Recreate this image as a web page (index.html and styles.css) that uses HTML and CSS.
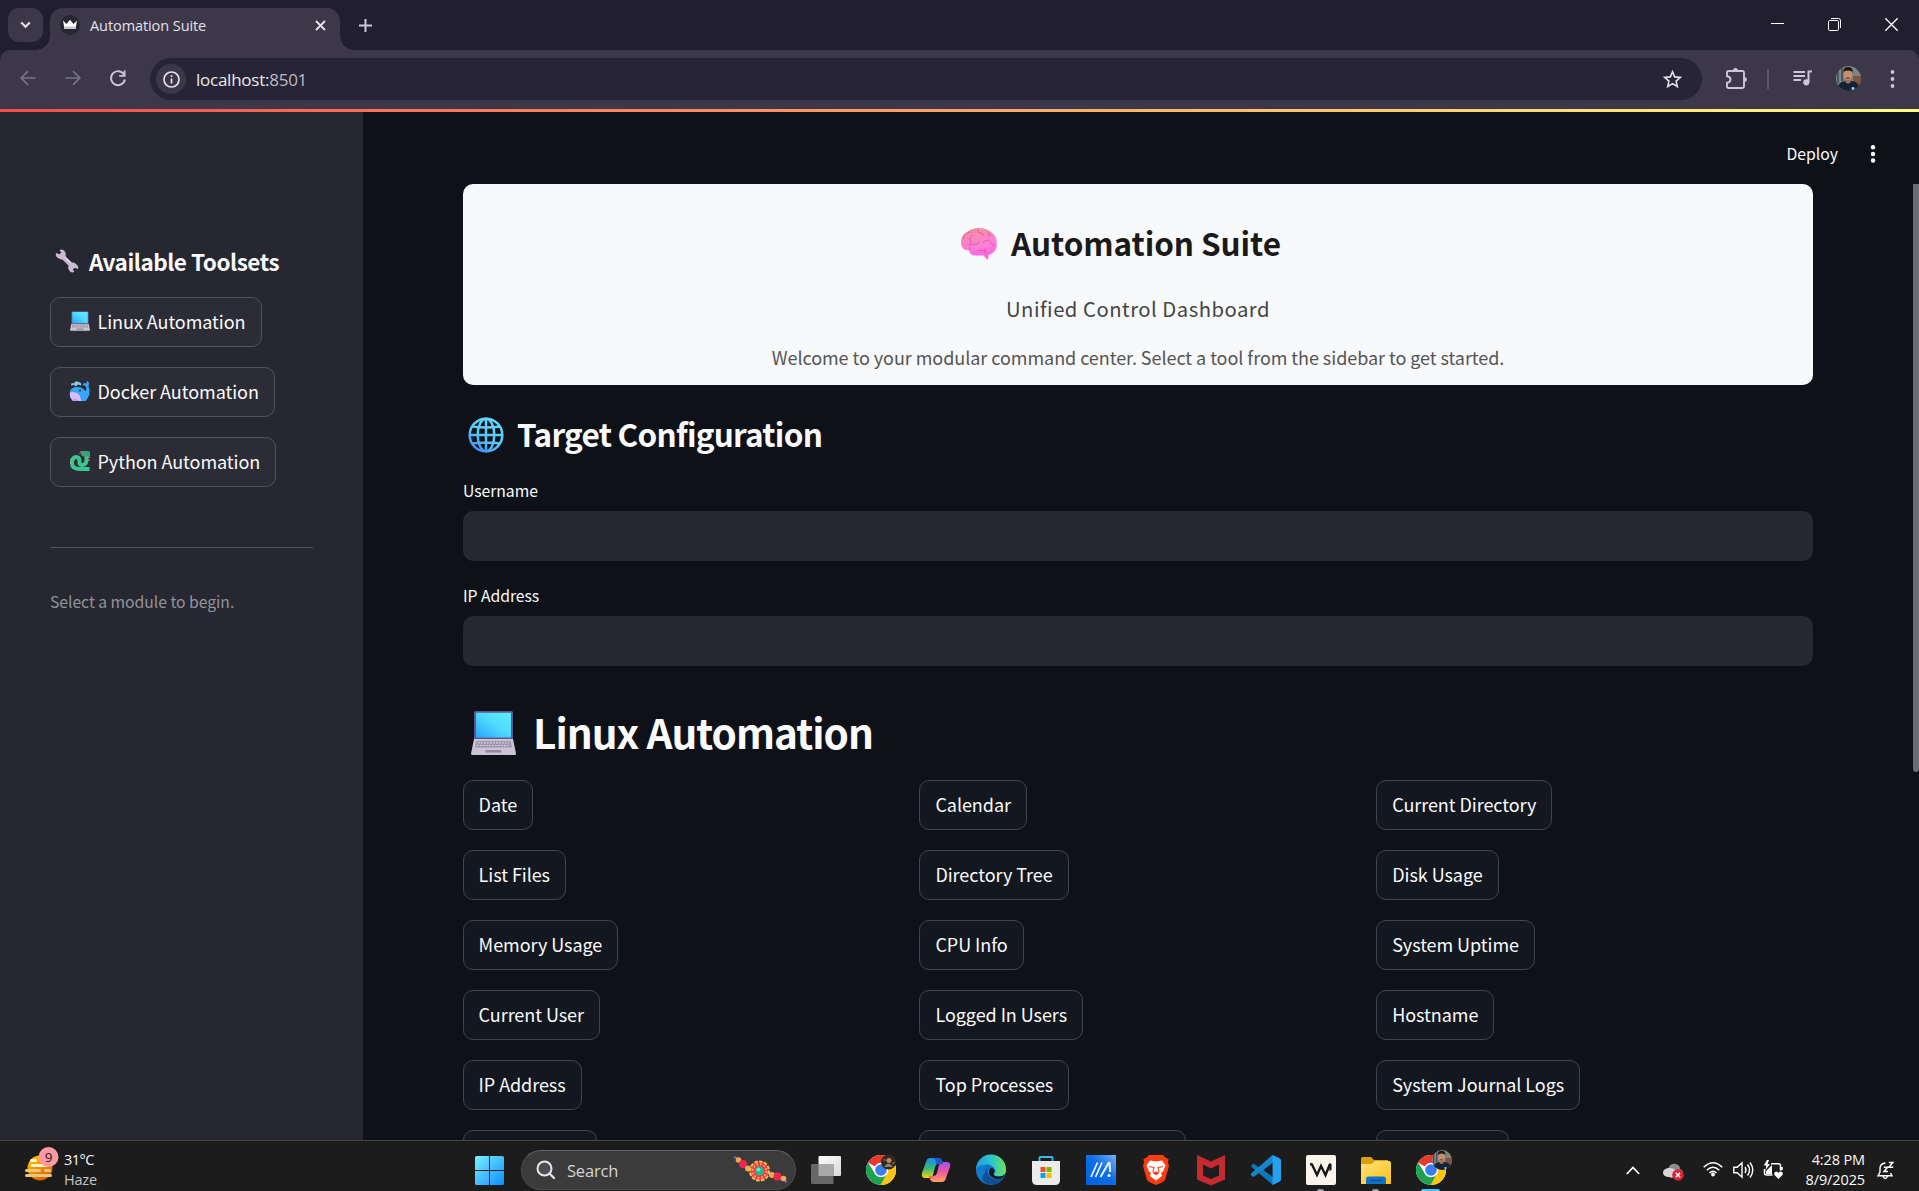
FILE: index.html
```html
<!DOCTYPE html>
<html lang="en">
<head>
<meta charset="utf-8">
<title>Automation Suite</title>
<link rel="stylesheet" href="styles.css">
</head>
<body>
<svg class="defs" width="0" height="0" aria-hidden="true">
  <defs>
    <linearGradient id="screen" x1="0" y1="1" x2="1" y2="0"><stop offset="0" stop-color="#2aa5fb"/><stop offset=".55" stop-color="#50dcfe"/><stop offset="1" stop-color="#5cecff"/></linearGradient>
    <linearGradient id="brain" x1=".3" y1="0" x2=".5" y2="1"><stop offset="0" stop-color="#f58f9d"/><stop offset=".6" stop-color="#fb7fdb"/><stop offset="1" stop-color="#ff5ae0"/></linearGradient>
    <linearGradient id="globe" gradientUnits="userSpaceOnUse" x1="28" y1="2" x2="8" y2="34"><stop offset="0" stop-color="#62dcff"/><stop offset=".6" stop-color="#56c4fb"/><stop offset="1" stop-color="#3d8cf0"/></linearGradient>
    <linearGradient id="whale" x1="0" y1="0" x2="1" y2="1"><stop offset="0" stop-color="#3ea6e8"/><stop offset="1" stop-color="#32a4ff"/></linearGradient>
    <linearGradient id="win" x1="0" y1="0" x2="1" y2="1"><stop offset="0" stop-color="#7df0ff"/><stop offset="1" stop-color="#0a8efd"/></linearGradient>
    <linearGradient id="sun" x1="0" y1="0" x2=".6" y2="1"><stop offset="0" stop-color="#ffd500"/><stop offset="1" stop-color="#e45a07"/></linearGradient>
    <linearGradient id="edgeA" x1="0" y1="0" x2="1" y2="0"><stop offset="0" stop-color="#1c9fe0"/><stop offset=".5" stop-color="#2cc4cf"/><stop offset="1" stop-color="#6be05a"/></linearGradient>
    <linearGradient id="copA" x1="0" y1="0" x2="0" y2="1"><stop offset="0" stop-color="#1f8cf0"/><stop offset=".5" stop-color="#31b87c"/><stop offset="1" stop-color="#f5d20b"/></linearGradient>
    <linearGradient id="copB" x1="0" y1="0" x2="0" y2="1"><stop offset="0" stop-color="#a64cf0"/><stop offset=".5" stop-color="#ee5a9c"/><stop offset="1" stop-color="#ffa05a"/></linearGradient>
    <linearGradient id="asus" x1="0" y1="1" x2="1" y2="0"><stop offset="0" stop-color="#0062e0"/><stop offset=".55" stop-color="#0e6fe6"/><stop offset="1" stop-color="#7ab0f5"/></linearGradient>
    <linearGradient id="folder" x1="0" y1="0" x2="1" y2="1"><stop offset="0" stop-color="#ffe07a"/><stop offset="1" stop-color="#fcc21d"/></linearGradient>
    <linearGradient id="taskA" x1="0" y1="0" x2="1" y2="1"><stop offset="0" stop-color="#fff"/><stop offset="1" stop-color="#d8d8d8"/></linearGradient>
    <symbol id="laptop" viewBox="0 0 45 44">
      <path d="M3 1.5Q3 0 4.5 0h36Q42 0 42 1.5V28H3z" fill="#5c578f"/>
      <path d="M5 1.8h35V26.500H5z" fill="url(#screen)"/>
      <path d="M3 28h39l3 14.500Q45 44 43.500 44h-42Q0 44 0 42.500z" fill="#c9c3d4"/>
      <path d="M5.500 30h34l1.500 6.500H4z" fill="#9d98ab"/>
      <path d="M7 31.800h31M6 34.500h33" stroke="#d8d3e2" stroke-width="1.200" stroke-dasharray="1.800 1.200"/>
      <path d="M15 39h15l.8 2.500H14z" fill="#8f8a9e"/>
    </symbol>
    <symbol id="chrome" viewBox="0 0 30 30">
      <circle cx="15" cy="15" r="15" fill="#fff"/>
      <path d="M15 15 2 7.500A15 15 0 0 1 28 7.500z" fill="#e8392c"/>
      <path d="M15 8h13.300A15 15 0 0 1 14 30l7.200-11.500z" fill="#fdc613"/>
      <path d="M2 7.500A15 15 0 0 0 14.500 30l6.600-11.500A7 7 0 0 1 8.900 18.500z" fill="#1ea250"/>
      <circle cx="15" cy="15" r="7.200" fill="#fff"/><circle cx="15" cy="15" r="5.800" fill="#3b7ded"/>
    </symbol>
    <symbol id="portrait" viewBox="0 0 25 25">
      <clipPath id="pc"><circle cx="12.500" cy="12.500" r="12.500"/></clipPath>
      <g clip-path="url(#pc)"><path d="M0 0h25v25H0z" fill="#7e8482"/><path d="M17 10h8v10h-8z" fill="#845340"/><path d="M2 2v15M6 1v14" stroke="#3e4a4c" stroke-width="1.500"/>
      <path d="M1 25q0-9 8-10h7q8 1 8 10z" fill="#14233a"/><path d="M9.500 12h5v4.500q-2.500 2-5 0z" fill="#a3704f"/><ellipse cx="12" cy="8.500" rx="4.300" ry="5.500" fill="#c58f6e"/><path d="M7.500 7Q6.500 1 12 1t4.500 6l-1-2q-3.500-1-7 0z" fill="#17161a"/><path d="M10 11.500h4l-.8 1.500h-2.400z" fill="#6b4637"/><circle cx="17" cy="22.500" r="1.400" fill="#9fd7ef"/></g>
    </symbol>
  </defs>
</svg>

<header class="browser">
  <div class="tabstrip">
    <div class="tab-search"><svg width="11" height="8" viewBox="0 0 11 8"><path d="M1.200 1.500 5.500 5.800 9.800 1.500" class="ln" stroke-width="2.200"/></svg></div>
    <div class="tab">
      <svg width="20" height="20" viewBox="0 0 20 20"><circle cx="10" cy="10" r="10" fill="#262730"/><path d="M3 5.500 6.500 9 10 4.800 13.500 9 17 5.500 15.500 14h-11z" fill="#fff"/><path d="M4 11.500h12l-.5 2.500h-11z" fill="#c9c9cc"/></svg>
      <span class="tab-title">Automation Suite</span>
      <svg class="tab-x" width="11" height="11" viewBox="0 0 11 11"><path d="m1 1 9 9M10 1l-9 9" class="ln" stroke-width="1.800"/></svg>
    </div>
    <svg class="new-tab" width="13" height="13" viewBox="0 0 13 13"><path d="M6.500 0v13M0 6.500h13" class="lv" stroke-width="2"/></svg>
    <div class="win-controls">
      <svg width="13" height="13" viewBox="0 0 13 13"><path d="M0 5.500h13" stroke="#fff"/></svg>
      <svg width="13" height="13" viewBox="0 0 13 13" fill="none" stroke="#fff"><rect x=".5" y="2.500" width="10" height="10" rx="1.200"/><path d="M3 .500h7.500q2 0 2 2V10"/></svg>
      <svg width="13" height="13" viewBox="0 0 13 13"><path d="m.3.300 12.400 12.400M12.700.300.300 12.700" stroke="#fff" stroke-width="1.300"/></svg>
    </div>
  </div>
  <div class="toolbar">
    <svg class="nav dim" width="16" height="16" viewBox="0 0 16 16"><path d="M15.500 8H1.500M8 1.200 1.200 8 8 14.800" class="lv" stroke-width="1.700"/></svg>
    <svg class="nav dim" width="16" height="16" viewBox="0 0 16 16"><path d="M.5 8h14M8 1.200 14.800 8 8 14.800" class="lv" stroke-width="1.700"/></svg>
    <svg class="nav" width="16" height="16" viewBox="0 0 16 16"><path d="M14 4.500A7 7 0 1 0 14.900 9.500" class="lv" stroke-width="1.900"/><path d="M15.500.5v6.300H9.200V4.900h4.400V.5z" fill="#cbc6dc"/></svg>
    <div class="omnibox">
      <span class="info"><svg width="17" height="17" viewBox="0 0 17 17"><circle cx="8.500" cy="8.500" r="7.500" class="ln" stroke-width="1.700"/><path d="M8.500 7.500v5M8.500 4.300v1.800" class="ln" stroke-width="1.700"/></svg></span>
      <span class="url">localhost:<em>8501</em></span>
      <svg class="star" width="19" height="18" viewBox="0 0 19 18"><path d="m9.500 1.800 2.200 5.100 5.600.5-4.200 3.700 1.200 5.400-4.800-2.900-4.800 2.900 1.200-5.400-4.200-3.700 5.600-.5z" class="ln" stroke-width="1.600"/></svg>
    </div>
    <svg class="puzzle" width="21" height="21" viewBox="0 0 21 21"><path d="M2.500 3h14q1.500 0 1.500 1.500v14q0 1.500-1.500 1.500h-14Q1 20 1 18.500v-3.700q3.500-.3 3.500-3.300T1 8.200V4.500Q1 3 2.500 3z" class="lv" stroke-width="1.900"/><path d="M7 2.500a2.500 2.500 0 0 1 5 0zM18.500 9a2.500 2.500 0 0 1 0 5z" fill="#cbc6dc"/></svg>
    <span class="divider"></span>
    <svg class="media" width="20" height="16" viewBox="0 0 20 16"><path d="M.5 2h11.500M.5 6h11.500M.5 10h7.500M15.800 1.500H19M15.500 12V.6" class="lv" stroke-width="2"/><circle cx="13.300" cy="12.300" r="3.100" fill="#cbc6dc"/></svg>
    <svg class="avatar" width="25" height="25"><use href="#portrait"/></svg>
    <svg class="menu" width="5" height="18" viewBox="0 0 5 18" fill="#cbc6dc"><circle cx="2.500" cy="2" r="1.900"/><circle cx="2.500" cy="9" r="1.900"/><circle cx="2.500" cy="16" r="1.900"/></svg>
  </div>
</header>
<div class="decoration"></div>

<div class="app">
  <aside class="sidebar">
    <h3><svg width="24" height="24" viewBox="0 0 24 24"><path d="M5.500 5.500 19 19" stroke="#c4b4d2" stroke-width="4.500"/><path d="M7 5.500 20 18" stroke="#e3dbe9" stroke-width="1.500"/><path d="M4.500 1q4-1.500 6 2.500 1 4-1.500 6t-6-.5Q0 7 1 4l3.500 1.200 1.800-1.700zM19.500 23q-4 1.500-6-2.500-1-4 1.500-6t6 .5q3 2 2 5l-3.500-1.200-1.800 1.700z" fill="#c9bbd3"/></svg>Available Toolsets</h3>
    <button class="btn"><svg width="20" height="20"><use href="#laptop"/></svg>Linux Automation</button>
    <button class="btn"><svg width="20" height="20" viewBox="0 0 20 20"><path d="M0 10.500Q1 6 7 6t8 4q2-1 1-4.500L12.500 3.500q2-2.500 4-.5Q16 1 17.500 0q2.500 2 1 5 2.500 7-.5 11.500-1 2.500-2.500 3.500H3Q-1 16 0 10.500z" fill="url(#whale)"/><path d="M0 11.500q6-1.500 9.500 2.500l2 6H3Q-1 16 0 11.500z" fill="#d9bdfb"/><path d="M3 20q0-2 2-2.500l5 2.500z" fill="#b99cf5"/><circle cx="10" cy="9.500" r=".9" fill="#1b2c55"/><path d="M1 4.500q0-3.500 3-2Q5.500-1 8 1q4 0 3 3.500L8 3.500 6 5.500 4 4z" fill="#8cc8ea"/></svg>Docker Automation</button>
    <button class="btn"><svg width="20" height="20" viewBox="0 0 20 20"><path d="M16.500 3v5q0 6-4.500 6-3 0-2.500-4 0-4-3.500-4-4 .5-4 6 0 6 8 6h9.500" fill="none" stroke="#3cc592" stroke-width="4"/><path d="M10 0h8q2 0 2 2v3.500h-6Q11 5.500 10 0z" fill="#2fa578"/><path d="M19 5.500v5" stroke="#f5b92c" stroke-dasharray="1.500 1.500"/><path d="M10.800 1.200 9.300 3" stroke="#e0275d" stroke-width="1.200"/><path d="M.8 8v6" stroke="#e7c83a" stroke-dasharray="1.200 2"/></svg>Python Automation</button>
    <hr>
    <p>Select a module to begin.</p>
  </aside>

  <main>
    <div class="app-header"><span>Deploy</span>
      <svg width="6" height="18" viewBox="0 0 6 18" fill="#fafafa"><circle cx="3" cy="2.300" r="2.200"/><circle cx="3" cy="9" r="2.200"/><circle cx="3" cy="15.500" r="2.200"/></svg></div>
    <div class="content">
      <section class="hero">
        <h1><svg width="36" height="32" viewBox="0 0 36 32"><path d="M0 15.500Q-.5 8 5 5 10 0 18 0q7 0 12 4 6 4 5.800 11.500.5 6.500-4.300 9.500-1.500 1.300-4 2l-.5 5-4.500-4.500H14q-5 0-6-5-8-.5-8-7z" fill="url(#brain)"/><path d="M2.500 11q0-7 8-7M9 22q-2-6 5-6 4 1 4-3M17 1q-2 3 2 4t4 3M22 14q5-4 8 1 1 3 4 2.500M10 14q-3-4 2-7M17 22.500h8M27 4q3 2 1 5M24 20.500v4M6 17q3 0 4-3" fill="none" stroke="#d5589b" stroke-width=".8"/></svg><span>Automation Suite</span></h1>
        <h4>Unified Control Dashboard</h4>
        <p>Welcome to your modular command center. Select a tool from the sidebar to get started.</p>
      </section>
      <h2 class="target"><svg width="36" height="36" viewBox="0 0 36 36" fill="none" stroke="url(#globe)" stroke-width="2.500"><circle cx="18" cy="18" r="16.300"/><ellipse cx="18" cy="18" rx="8.300" ry="16.300"/><path d="M18 1.500v33.100M1.500 18.100 34.500 18M4 9.500q14 2 28 .1M4 26.500q14-2 28-.1"/></svg><span>Target Configuration</span></h2>
      <label class="l1">Username</label>
      <div class="input"></div>
      <label class="l2">IP Address</label>
      <div class="input"></div>
      <h2 class="section"><svg width="45" height="44"><use href="#laptop"/></svg><span>Linux Automation</span></h2>
      <div class="grid">
        <button class="btn">Date</button><button class="btn">Calendar</button><button class="btn">Current Directory</button>
        <button class="btn">List Files</button><button class="btn">Directory Tree</button><button class="btn">Disk Usage</button>
        <button class="btn">Memory Usage</button><button class="btn">CPU Info</button><button class="btn">System Uptime</button>
        <button class="btn">Current User</button><button class="btn">Logged In Users</button><button class="btn">Hostname</button>
        <button class="btn">IP Address</button><button class="btn">Top Processes</button><button class="btn">System Journal Logs</button>
        <button class="btn cut-a"></button><button class="btn cut-b"></button><button class="btn cut-c"></button>
      </div>
    </div>
    <div class="scrollbar"></div>
  </main>
</div>

<footer class="taskbar">
  <div class="weather">
    <svg width="34" height="36" viewBox="0 0 34 36"><circle cx="15" cy="22" r="12.500" fill="url(#sun)"/><path d="M6.500 14.500h4M7 19.500h16" stroke="#fff3c9" stroke-width="3" stroke-linecap="round"/><path d="M1.500 24.500h13M20.500 24.500h4M1.500 29.500h24" stroke="#e9c87c" stroke-width="3" stroke-linecap="round"/><circle cx="23.500" cy="11" r="10" fill="#ff99a4"/><text x="23.500" y="16" text-anchor="middle" class="badge">9</text></svg>
    <div><b>31°C</b><span>Haze</span></div>
  </div>
  <svg class="start" width="29" height="29" viewBox="0 0 29 29" fill="url(#win)"><path d="M1.500 0H14v14H0V1.500Q0 0 1.500 0zM15 0h12.500Q29 0 29 1.500V14H15zM0 15h14v14H1.500Q0 29 0 27.500zM15 15h14v12.500Q29 29 27.500 29H15z"/></svg>
  <div class="search">
    <svg width="20" height="20" viewBox="0 0 20 20"><circle cx="8.500" cy="8.500" r="7" fill="#4b4d50" stroke="#e4e8ec" stroke-width="2"/><path d="m13.500 13.500 4.500 4.500" stroke="#e4e8ec" stroke-width="2.200" stroke-linecap="round"/></svg>
    <span>Search</span>
    <svg class="rakhi" width="54" height="28" viewBox="0 0 54 28"><path d="M0 1q8 2 14 12M38 19l15 7" stroke="#8c6fd0" stroke-width="1.500" fill="none"/><circle cx="4.500" cy="4" r="2.800" fill="#f3a953"/><circle cx="9" cy="8" r="4" fill="#f2264b"/><circle cx="14" cy="12.500" r="3" fill="#f3a953"/><circle cx="38" cy="19" r="3" fill="#f3a953"/><circle cx="43.500" cy="20.500" r="4" fill="#f2264b"/><circle cx="49.500" cy="22.500" r="2.800" fill="#f3a953"/><circle cx="25.500" cy="15" r="9.500" fill="#f13a43" stroke="#f6b35c" stroke-width="2.200" stroke-dasharray="3.500 1.400"/><circle cx="25.500" cy="15" r="6.800" fill="none" stroke="#ffc768" stroke-width="1.600" stroke-dasharray="1.600 2"/><circle cx="25.500" cy="15" r="4.500" fill="#22b58e"/><circle cx="24.500" cy="13.500" r="2" fill="#7be0bc"/></svg>
  </div>
  <div class="apps">
    <i><svg width="30" height="30" viewBox="0 0 30 30"><rect x="7.500" y="1" width="22.500" height="20" rx="1" fill="url(#taskA)"/><path d="M1.500 9h21v19q0 1-1 1h-20Q0 29 0 27.500V10q0-1 1.500-1z" fill="#676767"/><path d="M7.500 9h15v12h-15z" fill="#a9a9a9"/></svg></i>
    <i><svg width="30" height="30" viewBox="0 0 30 30"><use href="#chrome"/><circle cx="22.500" cy="7" r="7.500" fill="#33281f"/><circle cx="23" cy="5.500" r="2.500" fill="#b98a6c"/><path d="M18 12q4-7 9 0" fill="#8a8077"/><path d="M17 5h3M26 9l3-2" stroke="#9c7a54"/></svg></i>
    <i><svg width="30" height="30" viewBox="0 0 30 30"><path d="M9 3h8q3 0 4 3l1 3h-5q-2 0-3 3l-2 8q-1 3-4 3H4q-4 0-3-5L5 7q1-4 4-4z" fill="url(#copA)"/><path d="M21 27h-8q-3 0-4-3l-1-3h5q2 0 3-3l2-8q1-3 4-3h4q4 0 3 5l-4 11q-1 4-4 4z" fill="url(#copB)"/><path d="M13 3h4q3 0 4 3l1 3h-5l-2 1q0-5-2-7z" fill="#1858ce"/><path d="M8 21h5q-1 3-4 3z" fill="#f56a55"/></svg></i>
    <i><svg width="30" height="30" viewBox="0 0 30 30"><circle cx="15" cy="15" r="15" fill="#1578c8"/><path d="M0 15A15 15 0 0 1 30 14q.5 7-7 7.500-6 .2-5-3 3-3-.5-6.500-4-4-9-2Q2 10 0 15z" fill="url(#edgeA)"/><path d="M9 18q0-7 6-8-5 1-5 8 1 10 12 10-8 4-14-1Q4 23 9 18z" fill="#0c519b"/><path d="M13.500 12q-3 2-2 6 2 6 9 6.500 5 0 7-2-3 5-7 6.500Q10 26 10 18q0-4 3.500-6z" fill="#124b94"/><path d="M18 18q-1 3.500 5 3.500 4 0 6-2.500l-1.500 3.500q-6 3-11 0t-3-8q2-3.500 4.500 0 1.500 2 0 3.500z" fill="#1c1c1c"/></svg></i>
    <i><svg width="30" height="30" viewBox="0 0 30 30"><path d="M8.500 8V3q0-1 1-1h11q1 0 1 1v5" fill="none" stroke="#2fc0f2" stroke-width="1.800"/><path d="M1 6h28v19q0 5-5 5H6q-5 0-5-5z" fill="#ececec"/><path d="M9.500 12h5v5h-5z" fill="#f25022"/><path d="M15.500 12h5v5h-5z" fill="#7fba00"/><path d="M9.500 18h5v5h-5z" fill="#00a4ef"/><path d="M15.500 18h5v5h-5z" fill="#ffb900"/></svg></i>
    <i><svg width="30" height="30" viewBox="0 0 30 30"><path d="M0 0h30v30H0z" fill="url(#asus)"/><path d="m5 22 6.500-14.500M9.500 22 16 7.500" stroke="#e8f2ff" stroke-width="1.800"/><path d="m14.500 22 8-14h1l.7 9" stroke="#e8f2ff" stroke-width="2" fill="none"/><circle cx="23" cy="20.500" r="1.500" fill="#fff"/></svg></i>
    <i><svg width="30" height="30" viewBox="0 0 30 30"><path d="M8 0h14l3 3 2.500 1-.5 4 1 3-4 14q-1 2-9 5-8-3-9-5L2 11l1-3-.5-4L5 3z" fill="#fb3c12"/><path d="M9 5.500 15 6.500l6-1 3.500 5-2.500 6-2 1.500 1 3-6 4.500-6-4.500 1-3-2-1.500-2.500-6z" fill="#fff"/><path d="m8 11.500 5 1M22 11.500l-5 1M13 12l-1 5M17 12l1 5M12.500 18l2.500 1.500 2.500-1.500-2.500-.8z" stroke="#fb3c12" stroke-width="1.100" fill="#fb3c12"/></svg></i>
    <i><svg width="30" height="30" viewBox="0 0 30 30"><path d="m1 0 14 6.500L29 0v24.500L15 30.500 1 24.500zm6 9.500v11L15 24l8-3.500v-11L15 13.500z" fill="#c42a30"/></svg></i>
    <i><svg width="30" height="30" viewBox="0 0 30 30"><path d="M21.500 0 8 12.500 3 8.500.5 10v2L22 30l3-4V6z" fill="#0b76bd"/><path d="M21.500 0 0 18.500v1.700L2.500 22 22 7.500z" fill="#1585cc"/><path d="m21.500 0 7.500 3.500 1 1.500v20l-1 1.500L21.500 30z" fill="#27a0ee"/><path d="M21.500 8 12.500 15l9 7z" fill="#1c1c1c"/></svg></i>
    <i class="run"><svg width="30" height="30" viewBox="0 0 30 30"><rect width="30" height="30" rx="2" fill="#fcf4ea"/><path d="m4 9 2 .5 5 10.500 4-9 4.500 9L24 9" fill="none" stroke="#151515" stroke-width="2.400"/><path d="M23 8.500h2.500v6l-2 2z" fill="#151515"/></svg></i>
    <i class="run"><svg width="30" height="30" viewBox="0 0 30 30"><path d="M0 12V4q0-2 2-2h8l3 3h14v7z" fill="#dd9f11"/><path d="M0 9h11l3-3h14q2 0 2 2v21H0z" fill="url(#folder)"/><path d="M5 29v-5q0-2.500 2.500-2.500h15Q25 21.500 25 24v5z" fill="#1173c7"/><path d="M9 25.500h12" stroke="#0b4f96" stroke-width="1.400"/></svg></i>
    <i class="run live"><svg width="30" height="30"><use href="#chrome"/></svg><svg class="mini" width="20" height="20"><use href="#portrait"/></svg></i>
  </div>
  <div class="tray">
    <svg class="chev" width="14" height="9" viewBox="0 0 14 9"><path d="m.8 8 6.200-6.500L13.200 8" fill="none" stroke="#fff" stroke-width="1.700"/></svg>
    <svg class="cloud" width="22" height="19" viewBox="0 0 22 19"><path d="M5 6q2-6 8-5 4 1 4 5 3 1 3 4v5H7z" fill="#8c8c8c"/><path d="M4.500 14Q0 13 0 9.500T5 5q6-.5 8 3l-3 6z" fill="#d5d5d5"/><circle cx="15" cy="12" r="5.800" fill="#e0202e"/><path d="m12.800 9.800 4.400 4.400M17.200 9.800l-4.400 4.400" stroke="#fff" stroke-width="1.500"/></svg>
    <svg class="wifi" width="20" height="16" viewBox="0 0 20 16" fill="none" stroke="#fff" stroke-width="1.500"><path d="M.7 6.200q9.300-9 18.600 0M3.700 9.200q6.300-6 12.600 0M6.500 12q3.500-3.300 7 0"/><circle cx="10" cy="13.500" r="1.500" fill="#fff" stroke-width="1"/></svg>
    <svg class="vol" width="21" height="18" viewBox="0 0 21 18" fill="none" stroke="#fff" stroke-width="1.400"><path d="M.8 6.200h3.400L9 1.800v14.400l-4.800-4.400H.8zM12 6q2 3 0 6M14.500 3.500q4 5.500 0 11M17 1.500q5.500 7.500 0 15"/></svg>
    <svg class="batt" width="22" height="20" viewBox="0 0 22 20" fill="none" stroke="#fff" stroke-width="1.500"><path d="M8 3.800h7.500q2 0 2 2v5M1.500 9v4q0 2 2 2h6M19 7v3"/><path d="M4 0 .8 5.500h2.500L2.500 10 7 4H4.500L6 0zM3 14v-3l6-6v9z" fill="#fff" stroke="none"/><path d="m15.500 19-4-4q-1-3 1.500-3.500 2 0 2.500 1.500.5-1.500 2.500-1.500 2.500.5 1.500 3.500z" fill="#fff" stroke="none"/></svg>
    <div class="clock"><span>4:28 PM</span><span>8/9/2025</span></div>
    <svg class="bell" width="18" height="19" viewBox="0 0 18 19" fill="none" stroke="#fff" stroke-width="1.400"><path d="M8.500 2Q3 2.500 3 7.500V11l-2 3.800h14L13.500 12M6 15.500q2.200 4 4.500 0"/><path d="M11.800 1.500h4L12 6.200h4.200M6.800 6.200h3.700L7 10.500h4" stroke-width="1.500"/></svg>
  </div>
</footer>
</body>
</html>
```

FILE: styles.css
```css
* { box-sizing: border-box; }
body {
  margin: 0;
  width: 1919px;
  height: 1191px;
  overflow: hidden;
  display: flex;
  flex-direction: column;
  background: #0e1117;
  font-family: "Noto Sans CJK SC", "Noto Sans", sans-serif;
  color: #fafafa;
}
svg { display: block; flex: none; overflow: visible; }
.defs { position: absolute; }
h1, h2, h3, h4, p, hr { margin: 0; font-weight: 400; }
.ln { fill: none; stroke: #e4e1ec; }
.lv { fill: none; stroke: #cbc6dc; }

/* Browser window */
.browser { flex: none; height: 109px; background: #211e2f; font-family: "Open Sans", "Noto Sans", sans-serif; }
.tabstrip { height: 50px; padding: 8px 21px 0 8px; display: flex; }
.tab-search { width: 35px; height: 34px; margin-right: 7px; border-radius: 11px; background: #3c384a; display: grid; place-items: center; }
.tab { position: relative; width: 290px; height: 42px; padding: 0 14px 8px 10px; border-radius: 13px 13px 0 0; background: #3c384a; display: flex; align-items: center; }
.tab::before, .tab::after { content: ""; position: absolute; bottom: 0; width: 14px; height: 14px; }
.tab::before { left: -14px; background: radial-gradient(circle at 0 0, transparent 13.500px, #3c384a 14px); }
.tab::after { right: -14px; background: radial-gradient(circle at 100% 0, transparent 13.500px, #3c384a 14px); }
.tab-title { margin-left: 10px; padding-top: 2px; font-size: 14.500px; letter-spacing: -0.080px; color: #e4e1ec; line-height: 20px; }
.tab-x { margin-left: auto; }
.new-tab { margin: 11px 0 0 19px; }
.win-controls { margin: 10px 0 0 auto; display: flex; gap: 44px; }
.toolbar { height: 59px; background: #3c384a; border-radius: 10px 10px 0 0; display: flex; align-items: center; padding: 0 24px 1px 20px; }
.nav { margin: 0 29px 2px 0; }
.dim { opacity: .42; }
.omnibox { width: 1552px; height: 42px; margin-left: -5px; border-radius: 21px; background: #272435; display: flex; align-items: center; padding: 0 20px 0 6px; }
.info { width: 30px; height: 30px; border-radius: 50%; background: #3c384a; display: grid; place-items: center; }
.url { margin-left: 10px; font-size: 17px; letter-spacing: -0.250px; color: #eae8f0; }
.url em { font-style: normal; color: #bcb9c6; }
.star { margin-left: auto; }
.puzzle { margin: 0 0 2px 24px; }
.divider { width: 2px; height: 20px; background: #5b576b; margin: 0 24px 0 20px; }
.media { margin-bottom: 2px; }
.avatar { margin: 0 29px 2px 23px; }
.menu { margin-bottom: 1px; }
.decoration { flex: none; height: 3px; background: linear-gradient(90deg, #ff4b4b, #fffd80); }

/* Application */
.app { flex: none; height: 1028px; display: flex; overflow: hidden; }
.sidebar { width: 363px; padding: 129px 50px 0; background: #262730; display: flex; flex-direction: column; align-items: flex-start; }
.sidebar h3 { height: 40px; line-height: 40px; margin: 0 0 16px 5px; font-size: 22.500px; font-weight: 600; letter-spacing: -0.470px; display: flex; gap: 10px; align-items: center; white-space: nowrap; }
.btn { height: 50px; padding: 0 15px 2px; border: 1px solid #41444c; border-radius: 10px; background: #131720; color: #fafafa; font: 400 18px/30px "Noto Sans CJK SC", "Noto Sans", sans-serif; letter-spacing: -0.060px; white-space: nowrap; display: flex; align-items: center; }
.sidebar .btn { margin-bottom: 20px; background: #2b2c36; border-color: #51525b; }
.sidebar .btn svg { margin: 0 7.500px 0 4px; }
.sidebar hr { width: 263px; height: 1px; border: 0; background: #51525b; margin: 40px 0 42px; }
.sidebar p { font-size: 15.750px; line-height: 24px; letter-spacing: -0.050px; color: #92939d; }
main { flex: 1; position: relative; }
.app-header { height: 72px; padding: 12px 43px 0 0; display: flex; justify-content: flex-end; align-items: center; gap: 32px; font-size: 15.750px; line-height: 24px; }
.content { padding: 0 106px 0 100px; }
.hero { height: 201px; padding-top: 33px; border-radius: 10px; background: #f8f9fb; text-align: center; color: #555; }
.hero h1 { display: flex; justify-content: center; gap: 14px; align-items: center; height: 50px; padding-right: 34px; line-height: 50px; font-size: 31.500px; font-weight: 600; letter-spacing: -0.080px; color: #1a1a1a; }
.hero h1 svg { margin-top: 3px; }
.hero h4 { margin-top: 27px; font-size: 20.250px; line-height: 30px; letter-spacing: .5px; color: #444; }
.hero p { margin-top: 18px; font-size: 18px; line-height: 30px; letter-spacing: -0.050px; }
.target, .section { display: flex; align-items: center; font-weight: 600; }
.target { margin: 23px 0 20px 5px; gap: 13px; font-size: 31.500px; line-height: 50px; letter-spacing: -0.750px; }
.target svg { margin-top: 3px; }
label { display: block; font-size: 15.750px; line-height: 24px; letter-spacing: -0.050px; padding-top: 1px; margin-bottom: 8px; }
.l2 { margin-top: 22px; }
.input { height: 50px; border-radius: 10px; background: #262730; }
.section { margin: 36px 0 18px 8px; gap: 17px; font-size: 40.500px; line-height: 60px; letter-spacing: -0.980px; }
.section svg { margin-top: 2px; }
.grid { display: grid; grid-template-columns: repeat(3, 1fr); gap: 20px; justify-items: start; margin-left: -0.400px; }
.cut-a { width: 134px; }
.cut-b { width: 267px; }
.cut-c { width: 133px; }
.scrollbar { position: absolute; right: 0; top: 72px; width: 6px; height: 588px; border-radius: 0 0 3px 3px; background: #6b6c70; }

/* Desktop taskbar */
.taskbar { flex: none; height: 51px; background: #1c1c1c; border-top: 1px solid #444; display: flex; overflow: hidden; font-family: "Open Sans", "Noto Sans", sans-serif; font-size: 15px; }
.weather { width: 475px; padding: 5px 0 0 25px; display: flex; gap: 5px; }
.weather b, .weather span, .clock span { display: block; font-weight: 400; line-height: 20px; }
.weather div { padding-top: 4px; font-size: 14.500px; letter-spacing: -0.500px; }
.weather span { color: #c4c4c4; letter-spacing: -0.200px; }
.badge { font-size: 13.500px; fill: #1c1c1c; }
.start { margin: 15px 17px 0 0; }
.search { width: 275px; height: 40px; margin-top: 9px; padding: 0 7px 0 14px; border-radius: 20px; background: #3b3b3b; border: 1px solid #4c4c4c; border-top-color: #636363; display: flex; align-items: center; }
.search span { margin-left: 11px; font-size: 16.500px; color: #d4d4d4; letter-spacing: -0.200px; }
.rakhi { margin-left: auto; }
.apps { display: flex; margin-left: 2px; }
.apps i { position: relative; width: 55px; height: 50px; padding: 14px 12.500px 0; }
.run::after { content: ""; position: absolute; left: 24px; top: 48px; width: 7px; height: 4px; border-radius: 2px; background: #9a9a9a; }
.live::after { left: 18px; width: 19px; background: #4cc2ff; }
.mini { position: absolute; right: 6px; top: 9px; }
.tray { margin-left: auto; padding: 0 24px 0 0; display: flex; }
.chev { margin: 25px 23px 0 0; }
.cloud { margin: 22px 18px 0 0; }
.wifi { margin: 20px 10px 0 0; }
.vol { margin: 20px 9px 0 0; }
.batt { margin: 19px 0 0; }
.clock { width: 80px; padding-top: 9px; text-align: right; font-size: 14.500px; letter-spacing: -0.120px; }
.bell { margin: 20px 0 0 12px; }
```
